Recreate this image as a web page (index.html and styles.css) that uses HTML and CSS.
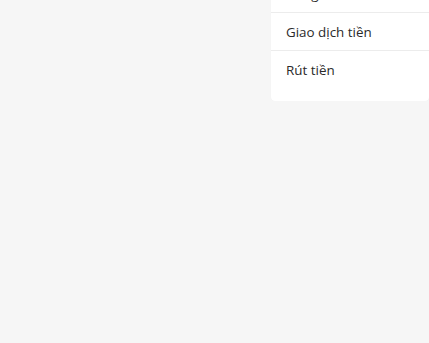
FILE: index.html
```html
<!DOCTYPE html>
<html lang="vi">
<head>
<meta charset="utf-8">
<link rel="stylesheet" href="styles.css">
</head>
<body>
<div class="page">
  <ul class="menu">
    <li class="item">Đăng xuất</li>
    <li class="item">Giao dịch tiền</li>
    <li class="item">Rút tiền</li>
  </ul>
</div>
</body>
</html>
```
FILE: styles.css
```css
html, body {
  margin: 0;
  padding: 0;
  background: #f6f6f6;
}
.page {
  display: flex;
  justify-content: flex-end;
  font-family: "Open Sans", "Noto Sans", sans-serif;
}
.menu {
  list-style: none;
  margin: -25px 0 0 0;
  padding: 0 0 13px 0;
  width: 158px;
  background: #ffffff;
  border-radius: 4px;
  box-shadow: 0 0 1px rgba(0,0,0,0.06);
}
.item {
  height: 37px;
  line-height: 38px;
  padding: 0 15px;
  font-size: 13.4px;
  color: #2a2a2a;
  border-bottom: 1px solid #ececec;
  box-sizing: content-box;
}
.item:last-child {
  border-bottom: none;
}
```
